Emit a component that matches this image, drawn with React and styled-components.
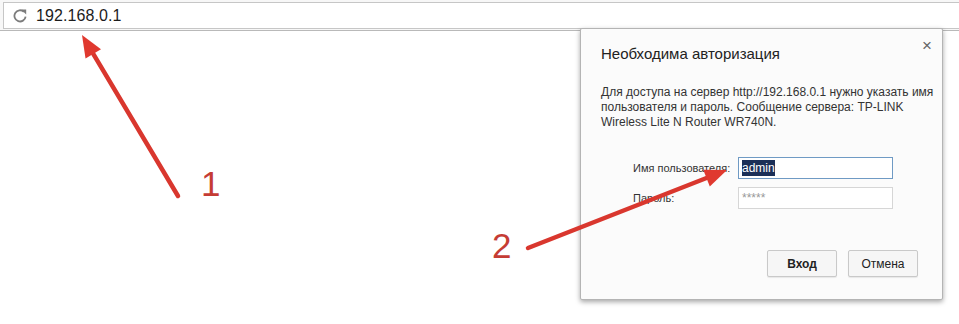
import React from 'react';
import styled, { createGlobalStyle } from 'styled-components';

const GlobalStyle = createGlobalStyle`
  html, body {
    margin: 0;
    padding: 0;
    background: #ffffff;
  }
  body {
    font-family: "Liberation Sans", Arial, sans-serif;
  }
`;

const Page = styled.div`
  position: relative;
  width: 959px;
  height: 324px;
  overflow: hidden;
  background: #ffffff;
`;

const Toolbar = styled.div`
  padding: 2px 0 0 3px;
  height: 31px;
  box-sizing: border-box;
  border-bottom: 1px solid #b9b9b9;
  background: #f7f7f7;
`;

const AddressBar = styled.div`
  display: flex;
  align-items: center;
  gap: 9px;
  height: 27px;
  box-sizing: border-box;
  padding-left: 9px;
  background: #ffffff;
  border: 1px solid #c6c6c6;
  border-right: none;
`;

const Url = styled.span`
  font-size: 16px;
  color: #1c1c1c;
  letter-spacing: 0.1px;
  padding-top: 1px;
`;

const Dialog = styled.div`
  position: absolute;
  left: 580px;
  top: 28px;
  width: 363px;
  height: 272px;
  box-sizing: border-box;
  background: #fbfbfb;
  border: 1px solid #b4b4b4;
  border-radius: 2px;
  box-shadow: 0 2px 5px rgba(0, 0, 0, 0.35);
  padding: 14px 24px 0 20px;
  display: flex;
  flex-direction: column;
  font-family: "Liberation Sans", Arial, sans-serif;
`;

const Header = styled.div`
  display: flex;
  justify-content: space-between;
  align-items: flex-start;
`;

const Title = styled.h2`
  margin: 2px 0 0;
  font-weight: normal;
  font-size: 15px;
  color: #222;
`;

const Close = styled.span`
  font-size: 17px;
  color: #666;
  margin: -6px -14px 0 0;
  line-height: 1;
`;

const Message = styled.p`
  margin: 23px 0 0;
  font-size: 12px;
  line-height: 15px;
  color: #333;
  width: 336px;
`;

const Form = styled.div`
  margin: 27px 0 0 32px;
  display: grid;
  grid-template-columns: 105px 155px;
  row-gap: 8px;
  align-items: center;
`;

const Label = styled.label`
  font-size: 11px;
  color: #333;
  white-space: nowrap;
`;

const Field = styled.div`
  height: 22px;
  box-sizing: border-box;
  border: 1px solid ${p => (p.focused ? '#6f9ac4' : '#d6d6d6')};
  background: #ffffff;
  display: flex;
  align-items: center;
  padding-left: 3px;
  font-size: 12px;
  color: ${p => (p.focused ? '#111' : '#999')};
`;

const Selected = styled.span`
  background: #1b2f57;
  color: #ffffff;
  padding: 1px 0;
`;

const Actions = styled.div`
  display: flex;
  justify-content: flex-end;
  gap: 11px;
  margin-top: 41px;
`;

const Button = styled.button`
  width: 70px;
  height: 27px;
  border: 1px solid #c9c9c9;
  border-radius: 2px;
  background: #f6f6f6;
  box-shadow: 0 1px 1px rgba(0, 0, 0, 0.08);
  font-family: "Liberation Sans", Arial, sans-serif;
  font-size: 12px;
  font-weight: ${p => (p.primary ? 'bold' : 'normal')};
  color: #222;
  padding: 0;
`;

const Overlay = styled.svg`
  position: absolute;
  left: 0;
  top: 0;
  pointer-events: none;
`;

const Number = styled.span`
  position: absolute;
  left: ${p => p.x}px;
  top: ${p => p.y}px;
  font-family: "Liberation Sans", Arial, sans-serif;
  font-size: 35px;
  color: #c53c34;
  line-height: 1;
`;

function ReloadIcon() {
  return (
    <svg width="14" height="14" viewBox="0 0 14 14">
      <path d="M12.6 7.6a5.6 5.6 0 1 1-1.7-4.8" fill="none" stroke="#7c7c7c" strokeWidth="1.8" />
      <path d="M8.2 0.6 L13.2 0.6 L13.2 5.6 Z" fill="#7c7c7c" />
    </svg>
  );
}

function Arrow({ x1, y1, x2, y2 }) {
  const ang = Math.atan2(y2 - y1, x2 - x1);
  const len = 22;
  const half = 9;
  const bx = x2 - Math.cos(ang) * len;
  const by = y2 - Math.sin(ang) * len;
  const px = -Math.sin(ang) * half;
  const py = Math.cos(ang) * half;
  return (
    <g>
      <line x1={x1} y1={y1} x2={bx} y2={by} stroke="#d9372e" strokeWidth="4.5" strokeLinecap="round" />
      <polygon points={`${x2},${y2} ${bx + px},${by + py} ${bx - px},${by - py}`} fill="#e0392f" />
    </g>
  );
}

export default function App() {
  return (
    <Page>
      <GlobalStyle />
      <Toolbar>
        <AddressBar>
          <ReloadIcon />
          <Url>192.168.0.1</Url>
        </AddressBar>
      </Toolbar>

      <Dialog>
        <Header>
          <Title>Необходима авторизация</Title>
          <Close>×</Close>
        </Header>
        <Message>
          Для доступа на сервер http://192.168.0.1 нужно указать имя пользователя и пароль. Сообщение сервера: TP-LINK Wireless Lite N Router WR740N.
        </Message>
        <Form>
          <Label>Имя пользователя:</Label>
          <Field focused>
            <Selected>admin</Selected>
          </Field>
          <Label>Пароль:</Label>
          <Field>*****</Field>
        </Form>
        <Actions>
          <Button primary>Вход</Button>
          <Button>Отмена</Button>
        </Actions>
      </Dialog>

      <Overlay width="959" height="324">
        <Arrow x1={178} y1={196} x2={82} y2={35} />
        <Arrow x1={528} y1={248} x2={727} y2={170} />
      </Overlay>
      <Number x={201} y={166}>1</Number>
      <Number x={492} y={228}>2</Number>
    </Page>
  );
}
